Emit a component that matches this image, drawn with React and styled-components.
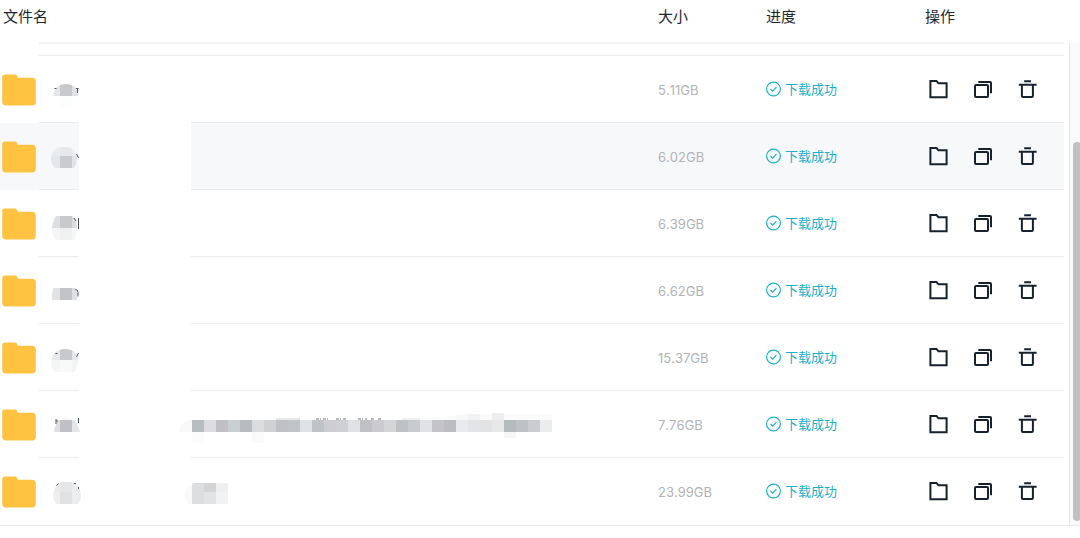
import React from 'react'
import styled, { createGlobalStyle } from 'styled-components'

const GlobalStyle = createGlobalStyle`
  * {
    box-sizing: border-box;
  }
  body {
    margin: 0;
    background: #ffffff;
    color: #1c2733;
    font-family: Inter, 'Noto Sans CJK SC', sans-serif;
  }
`

const Panel = styled.main`
  display: flex;
  gap: 5px;
  border-bottom: 1px solid #e9eaeb;
`

const Table = styled.table`
  flex: 1;
  min-width: 0;
  table-layout: fixed;
  border-collapse: separate;
  border-spacing: 0;
`

const Heading = styled.th`
  width: ${ props => props.$width || 'auto' };
  height: 42px;
  padding: 0 0 8px ${ props => props.$first ? '3px' : '0' };
  text-align: left;
  vertical-align: middle;
  font-size: 15px;
  line-height: 20px;
  font-weight: 400;
`

const SpacerCell = styled.td`
  height: 14px;
  padding: 0 0 0 39px;
`

const Spacer = styled.div`
  height: 14px;
  border-top: 2px solid #f3f3f4;
  border-bottom: 1px solid #ececed;
`

const Row = styled.tr`
  --fill: ${ props => props.$active ? '#f6f8fa' : '#ffffff' };
  --line: #ebecec;
  &:last-child {
    --line: transparent;
  }
`

const Cell = styled.td`
  height: 67px;
  padding: 0;
  background: var(--fill);
  border-bottom: 1px solid var(--line);
  vertical-align: middle;
`

const NameCell = styled.td`
  height: 67px;
  padding: 0;
`

const NameParts = styled.div`
  position: relative;
  display: flex;
  height: 67px;
`

const FolderSlot = styled.div`
  flex: 0 0 39px;
  display: flex;
  align-items: center;
  padding-left: 2px;
  background: var(--fill);
`

const NameSlot = styled.div`
  flex: ${ props => props.$grow ? '1' : '0 0 40px' };
  background: var(--fill);
  border-bottom: 1px solid var(--line);
`

const Blank = styled.div`
  flex: 0 0 112px;
`

const Mosaic = styled.svg`
  position: absolute;
  top: 0;
  left: 0;
`

const Size = styled.span`
  font-size: 13px;
  line-height: 20px;
  font-weight: 400;
  font-kerning: none;
  color: #b0b3b6;
`

const Status = styled.div`
  display: flex;
  align-items: center;
  gap: 3px;
  font-size: 13px;
  line-height: 20px;
  color: #1bb0c9;
`

const Actions = styled.div`
  display: flex;
  gap: 25px;
  padding-left: 3px;
`

const IconButton = styled.button`
  display: flex;
  width: 20px;
  height: 20px;
  padding: 0;
  border: none;
  background: none;
  color: #17222e;
  cursor: pointer;
`

const ScrollTrack = styled.div`
  flex: 0 0 11px;
  display: flex;
  flex-direction: column;
  margin-top: 43px;
  padding: 99px 0 4px 3px;
  overflow: hidden;
  background: #fafafa;
  border-left: 1px solid #e6e6e6;
`

const ScrollThumb = styled.div`
  flex: 1;
  width: 8px;
  border-radius: 4px;
  background: #c1c1c1;
`

const Folder = () => (
  <svg width="34" height="32" viewBox="0 0 34 32" aria-hidden="true">
    <path
      fill="#ffc341"
      d="M3 0.4h10.2q1.2 0 1.6 1.1l.5 1.2q.4 1 1.5 1H30q3.8 0 3.8 3.8v20.3q0 3.8-3.8 3.8H4q-3.8 0-3.8-3.8V3.2Q.2.4 3 .4z"
    />
  </svg>
)

const CheckIcon = () => (
  <svg width="16" height="16" viewBox="0 0 16 16" fill="none" stroke="currentColor" strokeWidth="1.2" aria-hidden="true">
    <circle cx="7.5" cy="8" r="6.9" />
    <path d="M4.5 8l2.2 2.1 3.7-4" />
  </svg>
)

const OpenIcon = () => (
  <svg width="20" height="20" viewBox="0 0 20 20" fill="none" stroke="currentColor" strokeWidth="2" aria-hidden="true">
    <path d="M2.4 2.1h6.1l2 2.2h8.1v14H2.4z" />
  </svg>
)

const CopyIcon = () => (
  <svg width="20" height="20" viewBox="0 0 20 20" fill="none" stroke="currentColor" strokeWidth="2" aria-hidden="true">
    <rect x="2" y="5.9" width="13" height="12.1" rx="1" />
    <path d="M5.3 2.9h11.7q1 0 1 1v10.4" />
  </svg>
)

const TrashIcon = () => (
  <svg width="20" height="20" viewBox="0 0 20 20" fill="none" stroke="currentColor" strokeWidth="2" aria-hidden="true">
    <path d="M6.2 2.2h6.8M.8 5.7h17.8M3.9 5.7v11.4q0 1 1 1h9q1 0 1-1V5.7" />
  </svg>
)

// Each block: [x, y, width, height, colour], measured from the row's corner
const strip = [
  '#b8bdc1', '#dddddf', '#c0c0c4', '#c9ced2', '#b7bcbf', '#dbdcdd', '#d0d1d2', '#c0c1c5', '#c0c4c7', '#dfe1e3',
  '#bfc3c6', '#cdcdd2', '#cfd0d4', '#e0e1e3', '#c0c0c5', '#cbcbcf', '#d3d5d6', '#c0c1c5', '#c8cccf', '#e1e2e5',
  '#c3c3c8', '#bcbdc1', '#e8eaec', '#e2e4e7', '#e1e3e5', '#e8e8e8', '#b5babd', '#bec2c6', '#cbcccf', '#ebecee',
].map((colour, i) => [192 + i * 12, 28, 12, 12, colour])

const files = [
  {
    size: '5.11GB',
    marks: 'M54.5 31.5h2M76 31.5h2.5M77.5 31v5',
    shape: 'M53 39q2-12 13-12t12.5 12v11h-25.5z',
    blocks: [[52, 27, 8, 12, '#e4e5e7'], [60, 27, 12, 12, '#c7c8cc'], [72, 27, 7, 12, '#e0e1e3'], [60, 39, 12, 11, '#fcfdfd']],
  },
  {
    size: '6.02GB',
    active: true,
    marks: 'M76.5 30l2 4',
    shape: 'M55 44q-4-4-4-9 0-12 13-12t13 12q0 5-3 9z',
    blocks: [
      [51, 23, 9, 9, '#e9eced'], [60, 23, 12, 9, '#e6e8e9'], [72, 23, 6, 9, '#eceeef'],
      [51, 32, 9, 12, '#e4e7e9'], [60, 32, 12, 12, '#cbcbcf'], [72, 32, 6, 12, '#e1e3e6'],
    ],
  },
  {
    size: '6.39GB',
    marks: 'M74 27l2 3M78.5 27v11',
    shape: 'M56 25h16q5 4 5 12 0 7-3 12H56q-4-4-4-11t4-13z',
    blocks: [
      [51, 25, 9, 12, '#dedfe1'], [60, 25, 12, 12, '#c8c9cd'], [72, 25, 6, 12, '#dbdcdf'],
      [51, 37, 9, 12, '#f5f5f6'], [60, 37, 12, 12, '#eff0f0'], [72, 37, 6, 12, '#f5f6f6'],
    ],
  },
  {
    size: '6.62GB',
    marks: 'M75.5 31.5q2.5 0 2.5 3v4',
    shape: 'M53 30h23q2 6 1 12H52q0-7 1-12z',
    blocks: [[51, 30, 9, 12, '#e2e3e5'], [60, 30, 12, 12, '#c3c4c8'], [72, 30, 6, 12, '#dedfe2']],
  },
  {
    size: '15.37GB',
    marks: 'M55.5 28.5h2M78.5 28l-2 4',
    shape: 'M54 47q-3-4-3-9 1-14 14-14t13 13q-1 7-4 10z',
    blocks: [
      [51, 24, 9, 11, '#e7e8ea'], [60, 24, 12, 11, '#c6c8cb'], [72, 24, 6, 11, '#e6e7e9'],
      [51, 35, 9, 12, '#f4f5f5'], [60, 35, 12, 12, '#f8fafa'], [72, 35, 6, 12, '#f3f4f4'],
    ],
  },
  {
    size: '7.76GB',
    marks: 'M56 27v5M57 28v2M78.5 26v5',
    faintMarks: 'M316 27h12M336 27h10M358 27h9M371 27h3M378 27h3',
    shape: 'M54 40q2-15 12-15t14 15zM192 25h360v26H192zM180 40q0-12 12-12v12zM552 19v9H420l72-9z',
    blocks: [
      [54, 25, 26, 3, '#f8f8f9'], [54, 28, 6, 12, '#dfe0e2'], [60, 28, 12, 12, '#c0c0c5'], [72, 28, 8, 12, '#e5e6e8'],
      [180, 28, 12, 12, '#f9f9f9'], [276, 26, 24, 2, '#e6e9ea'], [402, 26, 18, 2, '#eef0f1'], [420, 24, 36, 4, '#fafbfb'],
      [456, 22, 12, 6, '#f7f8f8'], [468, 22, 12, 6, '#f2f3f4'],
      [480, 22, 12, 6, '#fafafa'], [492, 21, 12, 7, '#eeeeee'], [504, 22, 48, 6, '#fbfbfb'],
      ...strip,
      [192, 40, 12, 10, '#fcfcfc'], [252, 40, 12, 11, '#fafafa'], [504, 40, 12, 6, '#f5f5f5'],
    ],
  },
  {
    size: '23.99GB',
    marks: 'M58.5 24.5l-2 2M74 24.5h2M78.5 28v2',
    shape: 'M56 45q-3-4-3-8 1-14 13-15 14 1 15 15 0 4-3 8zM228 24v21h-40q-3-4-3-9 0-9 9-12z',
    blocks: [
      [52, 23, 8, 10, '#ececed'], [60, 23, 12, 10, '#e5e6e7'], [72, 23, 9, 10, '#ebeced'],
      [52, 33, 8, 12, '#efefef'], [60, 33, 12, 12, '#e0e1e3'], [72, 33, 9, 12, '#ecedee'],
      [184, 24, 8, 21, '#f9f9f9'], [192, 24, 12, 21, '#dddee0'], [204, 24, 12, 9, '#d3d4d5'],
      [204, 33, 12, 12, '#e2e3e5'], [216, 24, 12, 9, '#efefef'], [216, 33, 12, 12, '#f1f3f3'],
    ],
  },
]

const FileRow = ({ file, index }) => (
  <Row $active={file.active}>
    <NameCell>
      <NameParts>
        <FolderSlot><Folder /></FolderSlot>
        <NameSlot />
        <Blank />
        <NameSlot $grow />
        <Mosaic width="560" height="66" viewBox="0 -1 560 66" aria-hidden="true">
          <clipPath id={`smudge-${index}`}>
            <path d={file.shape} />
          </clipPath>
          <g clipPath={`url(#smudge-${index})`} shapeRendering="crispEdges">
            {file.blocks.map(([x, y, width, height, fill], i) => (
              <rect key={i} x={x} y={y} width={width} height={height} fill={fill} />
            ))}
          </g>
          <path d={file.marks} fill="none" stroke="#4b535d" />
          {file.faintMarks && (
            <path d={file.faintMarks} fill="none" stroke="#b4b8bd" strokeWidth="2" strokeDasharray="3 1 1 2" />
          )}
        </Mosaic>
      </NameParts>
    </NameCell>
    <Cell><Size>{file.size}</Size></Cell>
    <Cell>
      <Status><CheckIcon />下载成功</Status>
    </Cell>
    <Cell>
      <Actions>
        <IconButton type="button" aria-label="打开文件夹"><OpenIcon /></IconButton>
        <IconButton type="button" aria-label="复制"><CopyIcon /></IconButton>
        <IconButton type="button" aria-label="删除"><TrashIcon /></IconButton>
      </Actions>
    </Cell>
  </Row>
)

const App = () => (
  <>
    <GlobalStyle />
    <Panel>
      <Table>
        <thead>
          <tr>
            <Heading scope="col" $first>文件名</Heading>
            <Heading scope="col" $width="108px">大小</Heading>
            <Heading scope="col" $width="159px">进度</Heading>
            <Heading scope="col" $width="139px">操作</Heading>
          </tr>
        </thead>
        <tbody>
          <tr aria-hidden="true">
            <SpacerCell colSpan={4}><Spacer /></SpacerCell>
          </tr>
          {files.map((file, index) => (
            <FileRow key={file.size} file={file} index={index} />
          ))}
        </tbody>
      </Table>
      <ScrollTrack>
        <ScrollThumb />
      </ScrollTrack>
    </Panel>
  </>
)

export default App
